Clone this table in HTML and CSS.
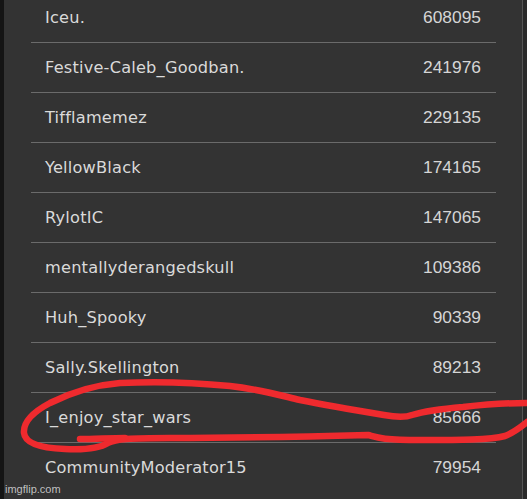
FILE: index.html
```html
<!DOCTYPE html>
<html>
<head>
<meta charset="utf-8">
<link rel="stylesheet" href="styles.css">
</head>
<body>
<div class="frame">
  <div class="edge-left"></div>
  <div class="board">
    <div class="row"><span class="name">Iceu.</span><span class="score">608095</span></div>
    <div class="row"><span class="name">Festive-Caleb_Goodban.</span><span class="score">241976</span></div>
    <div class="row"><span class="name">Tifflamemez</span><span class="score">229135</span></div>
    <div class="row"><span class="name">YellowBlack</span><span class="score">174165</span></div>
    <div class="row"><span class="name">RylotIC</span><span class="score">147065</span></div>
    <div class="row"><span class="name">mentallyderangedskull</span><span class="score">109386</span></div>
    <div class="row"><span class="name">Huh_Spooky</span><span class="score">90339</span></div>
    <div class="row"><span class="name">Sally.Skellington</span><span class="score">89213</span></div>
    <div class="row"><span class="name">I_enjoy_star_wars</span><span class="score">85666</span></div>
    <div class="row last"><span class="name">CommunityModerator15</span><span class="score">79954</span></div>
  </div>
  <div class="edge-right"></div>
</div>
<svg class="scribble" width="527" height="499" viewBox="0 0 527 499">
  <path d="M527,403 C515,403 490,404 463,407 C440,409 425,411 412,415 C404,418 395,417 384,415 C360,411 330,406 300,400 C275,394 258,389 230,386 C200,383 160,381 120,383 C95,385 72,392 50,403 C33,412 23,422 24,433 C25,443 40,448 65,449 C85,450 100,448 108,443 C115,439 130,438 170,438 C230,438 330,436 368,435 C376,437 380,440 420,440 C460,440 490,440 505,436 C515,432 522,426 527,422" />
  <path d="M80,439 C95,439 110,438 125,438" />
</svg>
<div class="watermark">imgflip.com</div>
</body>
</html>
```
FILE: styles.css
```css
html, body {
  margin: 0;
  padding: 0;
}
body {
  background: #333333;
  width: 527px;
  height: 499px;
  overflow: hidden;
  position: relative;
}
.frame {
  display: flex;
  height: 499px;
}
.edge-left {
  width: 4px;
  background: #141414;
  flex: none;
}
.board {
  flex: 1;
  margin-top: -7px;
  padding: 0 26px 0 27px;
  display: flex;
  flex-direction: column;
}
.row {
  height: 49px;
  border-bottom: 1px solid #6b6b6b;
  display: flex;
  align-items: center;
  justify-content: space-between;
  padding: 0 15px 0 14px;
}
.row.last {
  border-bottom: none;
}
.name {
  font-family: "DejaVu Sans", Verdana, sans-serif;
  font-size: 16.2px;
  letter-spacing: 0.2px;
  color: #dadada;
}
.score {
  font-family: "Liberation Sans", Arial, sans-serif;
  font-size: 17.4px;
  color: #d6d6d6;
}
.edge-right {
  width: 4px;
  flex: none;
  border-left: 1px solid #555555;
  background: #2a2a2a;
}
.scribble {
  position: absolute;
  left: 0;
  top: 0;
  fill: none;
  stroke: #ef2a2e;
  stroke-width: 6.5;
  stroke-linecap: round;
  stroke-linejoin: round;
}
.watermark {
  position: absolute;
  left: 5px;
  top: 483px;
  font-family: "Liberation Sans", Arial, sans-serif;
  font-size: 11px;
  color: rgba(220, 220, 220, 0.85);
}
```
